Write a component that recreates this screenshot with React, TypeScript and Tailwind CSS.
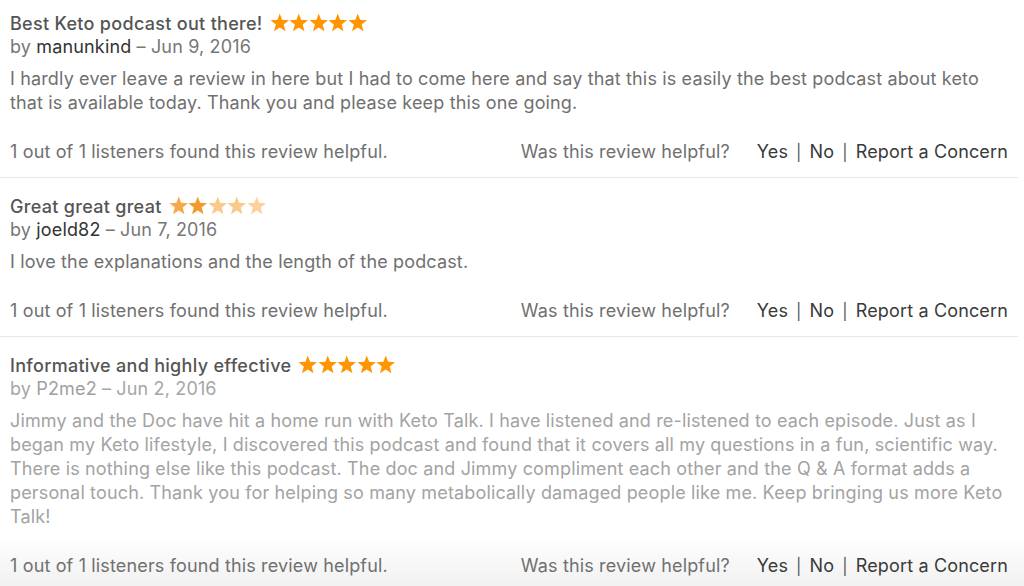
import React from 'react';

// One review row in the podcast reviews list
interface Review {
    id: string;
    title: string;
    author: string;
    date: string;
    body: string[];
    faded?: boolean;
    starShades?: string[];
}

const reviews: Review[] = [
    {
        id: 'r1',
        title: 'Best Keto podcast out there!',
        author: 'manunkind',
        date: 'Jun 9, 2016',
        body: [
            'I hardly ever leave a review in here but I had to come here and say that this is easily the best podcast about keto',
            'that is available today. Thank you and please keep this one going.',
        ],
    },
    {
        id: 'r2',
        title: 'Great great great',
        author: 'joeld82',
        date: 'Jun 7, 2016',
        body: ['I love the explanations and the length of the podcast.'],
        starShades: ['#f7a84a', '#f39a2c', '#fbc98a', '#fbc98a', '#fcd29a'],
    },
    {
        id: 'r3',
        title: 'Informative and highly effective',
        author: 'P2me2',
        date: 'Jun 2, 2016',
        faded: true,
        body: [
            'Jimmy and the Doc have hit a home run with Keto Talk. I have listened and re-listened to each episode. Just as I',
            'began my Keto lifestyle, I discovered this podcast and found that it covers all my questions in a fun, scientific way.',
            'There is nothing else like this podcast. The doc and Jimmy compliment each other and the Q & A format adds a',
            'personal touch. Thank you for helping so many metabolically damaged people like me. Keep bringing us more Keto',
            'Talk!',
        ],
    },
];

function Star({ color }: { color: string }) {
    return (
        <svg viewBox="0 0 20 20" className="w-[19.5px] h-[19.5px]" fill={color}>
            <polygon points="10,0.5 12.4,7 19.5,7.4 14,11.8 15.9,18.8 10,14.9 4.1,18.8 6,11.8 0.5,7.4 7.6,7" />
        </svg>
    );
}

function ReviewItem({ review, last }: { review: Review; last: boolean }) {
    const shades = review.starShades || ['#ff9500', '#ff9500', '#ff9500', '#ff9500', '#ff9500'];
    return (
        <div className={`px-[10px] ${last ? '' : 'border-b border-[#e8e8e8]'}`}>
            <div className="flex items-center h-6 text-[18px] tracking-[0.3px] font-medium text-[#555555]">
                <span>{review.title}</span>
                <span className="flex items-center ml-[7px] -mt-[1px]">
                    {shades.map((c, i) => (
                        <Star key={i} color={c} />
                    ))}
                </span>
            </div>
            <div className={`h-6 leading-6 ${review.faded ? 'text-[#a6a6a6]' : 'text-[#777777]'}`}>
                by <span className={review.faded ? 'text-[#a0a0a0]' : 'text-[#333333]'}>{review.author}</span> – {review.date}
            </div>
            <div className={`mt-2 leading-6 ${review.faded ? 'text-[#a3a3a3]' : 'text-[#707070]'}`}>
                {review.body.map((line, i) => (
                    <div key={i} className="whitespace-nowrap">{line}</div>
                ))}
            </div>
            <div className="mt-[25px] mb-[13px] h-6 flex items-center justify-between leading-6">
                <span className="text-[#707070]">1 out of 1 listeners found this review helpful.</span>
                <div className="flex items-center">
                    <span className="text-[#707070] mr-[27px]">Was this review helpful?</span>
                    <span className="text-[#3a3a3a]">Yes</span>
                    <span className="text-[#555555] text-[16px] mx-[8px]">|</span>
                    <span className="text-[#3a3a3a]">No</span>
                    <span className="text-[#555555] text-[16px] mx-[8px]">|</span>
                    <span className="text-[#3a3a3a]">Report a Concern</span>
                </div>
            </div>
        </div>
    );
}

export default function App() {
    return (
        <div
            className="w-[1024px] h-[586px] overflow-hidden bg-[linear-gradient(to_bottom,#ffffff_0,#ffffff_535px,#f1f1f1_586px)] pt-[11px] pr-[6px] text-[18px] tracking-[0.15px]"
            style={{ fontFamily: 'Inter, "Noto Sans", sans-serif' }}
        >
            <div className="flex flex-col gap-[16px]">
                {reviews.map((r, idx) => (
                    <ReviewItem key={r.id} review={r} last={idx === reviews.length - 1} />
                ))}
            </div>
        </div>
    );
}
